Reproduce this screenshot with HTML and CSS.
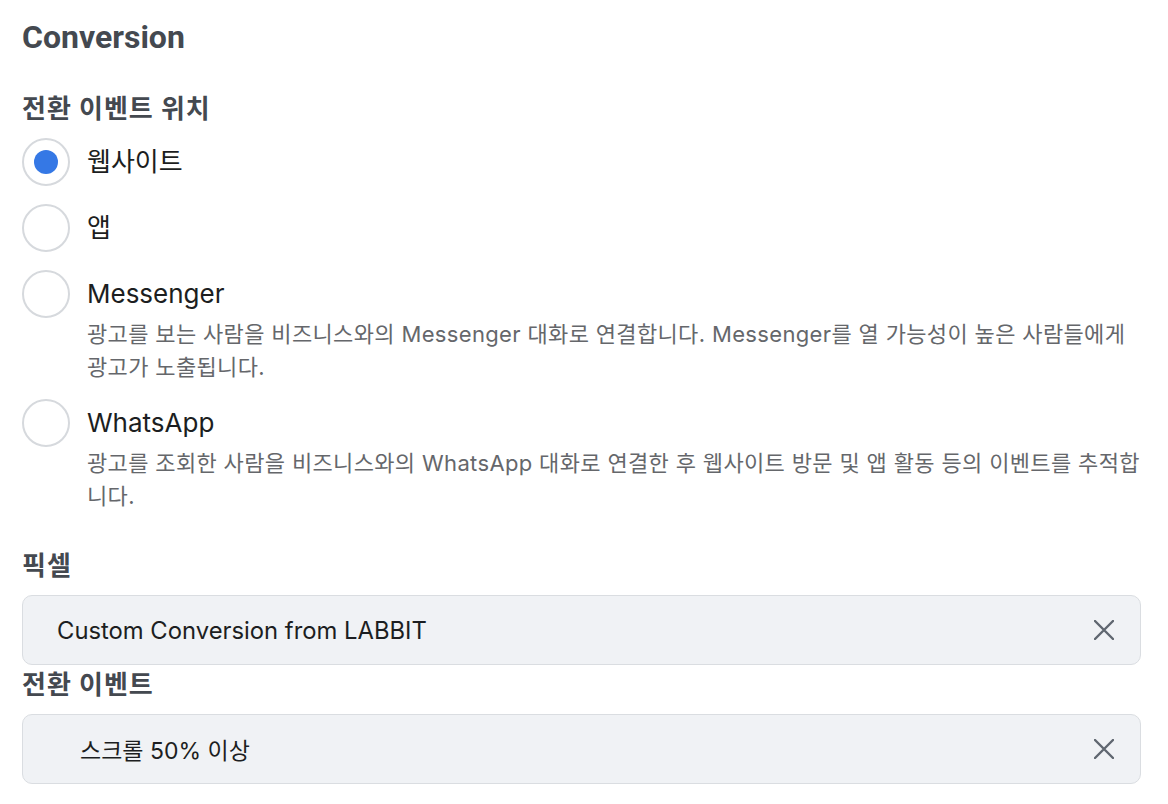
FILE: index.html
```html
<!DOCTYPE html>
<html lang="ko">
<head>
<meta charset="utf-8">
<link rel="stylesheet" href="styles.css">
</head>
<body>
<main class="panel">
  <h1 class="title">Conversion</h1>

  <h2 class="heading first">전환 이벤트 위치</h2>
  <div class="radio-list">
    <div class="radio-row">
      <span class="radio checked"><span class="dot"></span></span>
      <div class="radio-text">
        <div class="label">웹사이트</div>
      </div>
    </div>
    <div class="radio-row">
      <span class="radio"></span>
      <div class="radio-text">
        <div class="label">앱</div>
      </div>
    </div>
    <div class="radio-row">
      <span class="radio"></span>
      <div class="radio-text">
        <div class="label">Messenger</div>
        <div class="desc">광고를 보는 사람을 비즈니스와의 Messenger 대화로 연결합니다. Messenger를 열 가능성이 높은 사람들에게 광고가 노출됩니다.</div>
      </div>
    </div>
    <div class="radio-row">
      <span class="radio"></span>
      <div class="radio-text">
        <div class="label">WhatsApp</div>
        <div class="desc">광고를 조회한 사람을 비즈니스와의 WhatsApp 대화로 연결한 후 웹사이트 방문 및 앱 활동 등의 이벤트를 추적합니다.</div>
      </div>
    </div>
  </div>

  <h2 class="heading pixel">픽셀</h2>
  <div class="field">
    <span class="field-value">Custom Conversion from LABBIT</span>
    <svg class="clear" viewBox="0 0 20 20" width="20" height="20" aria-hidden="true">
      <path d="M1 1 L19 19 M19 1 L1 19" stroke="#606770" stroke-width="2.4" stroke-linecap="round" fill="none"/>
    </svg>
  </div>

  <h2 class="heading event">전환 이벤트</h2>
  <div class="field">
    <span class="field-value indent">스크롤 50% 이상</span>
    <svg class="clear" viewBox="0 0 20 20" width="20" height="20" aria-hidden="true">
      <path d="M1 1 L19 19 M19 1 L1 19" stroke="#606770" stroke-width="2.4" stroke-linecap="round" fill="none"/>
    </svg>
  </div>
</main>
</body>
</html>
```

FILE: styles.css
```css
* { box-sizing: border-box; }

body {
  margin: 0;
  background: #ffffff;
  font-family: Inter, "Noto Sans CJK KR", sans-serif;
  color: #1c1e21;
}

.panel {
  width: 1141px;
  padding: 17px 0 0 22px;
}

.title {
  margin: 0;
  font-family: Roboto, "Noto Sans CJK KR", sans-serif;
  font-size: 32px;
  line-height: 40px;
  font-weight: 700;
  color: #444950;
}

.heading {
  margin: 0;
  font-size: 26px;
  line-height: 30px;
  font-weight: 700;
  letter-spacing: 1px;
  color: #444950;
}

.heading.first { margin-top: 37px; }
.heading.pixel { margin-top: 41px; }
.heading.event { margin-top: 5px; }

.radio-list {
  display: flex;
  flex-direction: column;
  gap: 18px;
  margin-top: 14px;
}

.radio-row {
  display: flex;
  align-items: flex-start;
  gap: 17px;
}

.radio {
  flex: none;
  width: 48px;
  height: 48px;
  border: 2px solid #d6d9dd;
  border-radius: 50%;
  display: flex;
  align-items: center;
  justify-content: center;
  background: #fff;
}

.radio .dot {
  width: 24px;
  height: 24px;
  border-radius: 50%;
  background: #3578e5;
}

.radio-text {
  flex: 1;
  min-width: 0;
}

.label {
  font-size: 26px;
  line-height: 48px;
  color: #1c1e21;
}

.desc {
  font-size: 22px;
  line-height: 33px;
  letter-spacing: 0.35px;
  color: #65676b;
  margin-bottom: -3px;
}

.field {
  display: flex;
  align-items: center;
  height: 70px;
  margin-top: 14px;
  padding: 0 26px 0 34px;
  background: #f0f2f5;
  border: 1px solid #dadde1;
  border-radius: 10px;
}

.field-value {
  flex: 1;
  font-size: 23.8px;
  color: #1c1e21;
}

.field-value.indent {
  padding-left: 23px;
  font-size: 23px;
}

.clear {
  flex: none;
  width: 20px;
  height: 20px;
}
```
